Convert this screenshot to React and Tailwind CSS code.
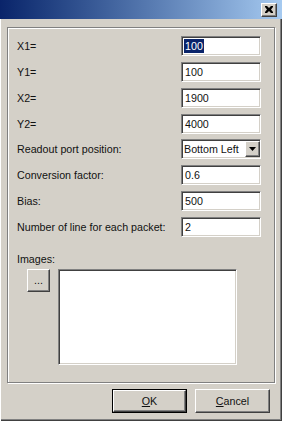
import React from 'react'

const sunken = 'border-t-[#808080] border-l-[#808080] border-b-white border-r-white border shadow-[inset_1px_1px_0_#404040,inset_-1px_-1px_0_#d4d0c8]'
const raised = 'border border-t-white border-l-white border-b-[#404040] border-r-[#404040] shadow-[inset_-1px_-1px_0_#808080]'

function Field({ label, value, selected }) {
  return (
    <div className="flex items-center h-[20px]">
      <span className="w-[164px] shrink-0">{label}</span>
      <div className={`w-[80px] h-[20px] bg-white flex items-center pl-[2px] ${sunken}`}>
        {selected ? <span className="bg-[#0a246a] text-white px-[1px] leading-[14px]">{value}</span> : <span className="pl-[1px]">{value}</span>}
      </div>
    </div>
  )
}

export default function App() {
  return (
    <div className="w-[282px] h-[421px] bg-[#d4d0c8] flex flex-col text-[10.7px] text-[#111] shadow-[inset_1px_0_0_#fff,inset_-1px_-1px_0_#404040,inset_-2px_-2px_0_#808080]"
      style={{ fontFamily: '"Liberation Sans", Arial, sans-serif' }}>

      {/* Title bar */}
      <div className="h-[19px] shrink-0 bg-gradient-to-r from-[#0a246a] to-[#a6caf0] flex items-center justify-end pr-[5px]">
        <div className={`w-[16px] h-[14px] bg-[#d4d0c8] flex items-center justify-center ${raised}`}>
          <svg width="8" height="7" viewBox="0 0 8 7">
            <path d="M0 0h2l2 2 2-2h2v1L6 3.5 8 6v1H6L4 5 2 7H0V6l2-2.5L0 1z" fill="#000" />
          </svg>
        </div>
      </div>

      <div className="px-[7px] pt-[8px]">
        {/* Panel */}
        <div className="w-[268px] h-[356px] border border-[#808080] shadow-[inset_1px_1px_0_#fff,1px_1px_0_#fff] pl-[9px] pt-[8px]">
          <div className="flex flex-col gap-[5.86px]">
            <Field label="X1=" value="100" selected />
            <Field label="Y1=" value="100" />
            <Field label="X2=" value="1900" />
            <Field label="Y2=" value="4000" />
            <div className="flex items-center h-[20px]">
              <span className="w-[164px] shrink-0">Readout port position:</span>
              <div className={`w-[80px] h-[20px] bg-white flex items-center ${sunken}`}>
                <span className="flex-1 pl-[2px]">Bottom Left</span>
                <div className={`w-[15px] h-[16px] bg-[#d4d0c8] flex items-center justify-center ${raised}`}>
                  <svg width="7" height="4" viewBox="0 0 7 4"><path d="M0 0h7L3.5 4z" fill="#000" /></svg>
                </div>
              </div>
            </div>
            <Field label="Conversion factor:" value="0.6" />
            <Field label="Bias:" value="500" />
            <Field label="Number of line for each packet:" value="2" />
          </div>

          {/* Images */}
          <div className="mt-[15px] leading-[14px]">Images:</div>
          <div className="flex mt-[3px] pl-[10px] gap-[8px]">
            <div className={`w-[23px] h-[23px] bg-[#d4d0c8] flex items-center justify-center ${raised}`}>...</div>
            <div className={`w-[179px] h-[96px] bg-white ${sunken}`} />
          </div>
        </div>
      </div>

      {/* Buttons */}
      <div className="flex justify-end gap-[8px] pr-[12px] mt-[6px]">
        <div className="w-[75px] h-[24px] border border-black">
          <div className={`w-full h-full flex items-center justify-center ${raised}`}>
            <span><span className="underline">O</span>K</span>
          </div>
        </div>
        <div className={`w-[75px] h-[24px] flex items-center justify-center ${raised}`}>
          <span><span className="underline">C</span>ancel</span>
        </div>
      </div>
    </div>
  )
}
